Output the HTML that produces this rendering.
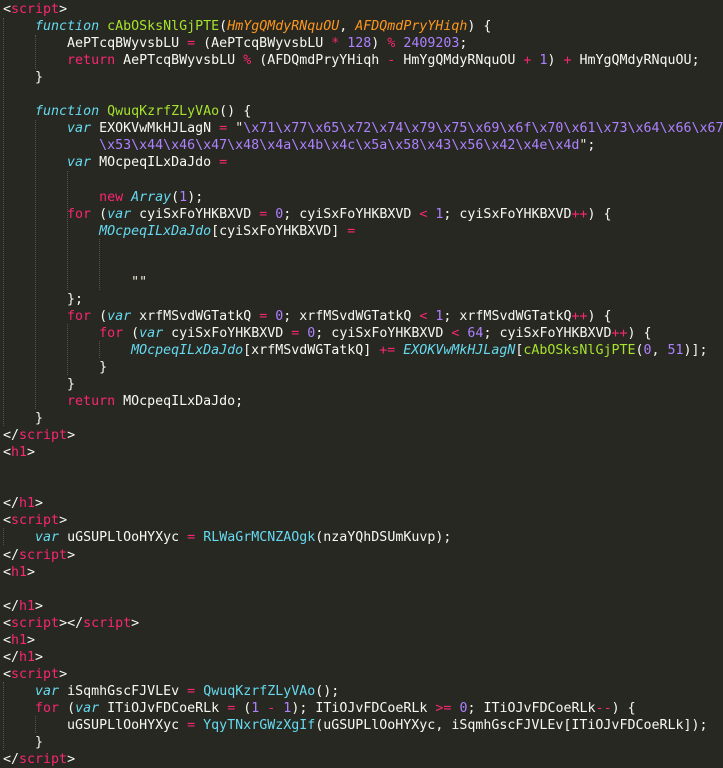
<!DOCTYPE html>
<html><head><meta charset="utf-8"><style>
html,body{margin:0;padding:0;background:#272822;width:723px;height:767px;overflow:hidden}
pre{margin:0;position:absolute;left:3px;top:1px;font-family:"DejaVu Sans Mono","Liberation Mono",monospace;font-size:13.3px;line-height:17.05px;color:#f8f8f2;white-space:pre}
.k{color:#f92672}.s{color:#66d9ef;font-style:italic}.f{color:#a6e22e}.p{color:#fd971f;font-style:italic}
.n{color:#ae81ff}.q{color:#ece9d8}.c{color:#66d9ef}.ci{color:#66d9ef;font-style:italic}
.g{position:absolute;width:0;border-left:1px dotted #55554d}
</style></head><body>
<div class="g" style="left:3px;top:18px;height:408px"></div>
<div class="g" style="left:35px;top:35px;height:34px"></div>
<div class="g" style="left:35px;top:120px;height:289px"></div>
<div class="g" style="left:67px;top:171px;height:119px"></div>
<div class="g" style="left:99px;top:239px;height:51px"></div>
<div class="g" style="left:67px;top:324px;height:51px"></div>
<div class="g" style="left:99px;top:341px;height:17px"></div>
<div class="g" style="left:3px;top:528px;height:17px"></div>
<div class="g" style="left:3px;top:682px;height:68px"></div>
<div class="g" style="left:35px;top:716px;height:17px"></div>
<pre>&lt;<span class="k">script</span>&gt;
    <span class="s">function</span> <span class="f">cAbOSksNlGjPTE</span>(<span class="p">HmYgQMdyRNquOU</span>, <span class="p">AFDQmdPryYHiqh</span>) {
        AePTcqBWyvsbLU <span class="k">=</span> (AePTcqBWyvsbLU <span class="k">*</span> <span class="n">128</span>) <span class="k">%</span> <span class="n">2409203</span>;
        <span class="k">return</span> AePTcqBWyvsbLU <span class="k">%</span> (AFDQmdPryYHiqh <span class="k">-</span> HmYgQMdyRNquOU <span class="k">+</span> <span class="n">1</span>) <span class="k">+</span> HmYgQMdyRNquOU;
    }

    <span class="s">function</span> <span class="f">QwuqKzrfZLyVAo</span>() {
        <span class="s">var</span> EXOKVwMkHJLagN <span class="k">=</span> <span class="q">"</span><span class="n">\x71\x77\x65\x72\x74\x79\x75\x69\x6f\x70\x61\x73\x64\x66\x67\x68</span>
            <span class="n">\x53\x44\x46\x47\x48\x4a\x4b\x4c\x5a\x58\x43\x56\x42\x4e\x4d</span><span class="q">"</span>;
        <span class="s">var</span> MOcpeqILxDaJdo <span class="k">=</span>

            <span class="k">new</span> <span class="ci">Array</span>(<span class="n">1</span>);
        <span class="k">for</span> (<span class="s">var</span> cyiSxFoYHKBXVD <span class="k">=</span> <span class="n">0</span>; cyiSxFoYHKBXVD <span class="k">&lt;</span> <span class="n">1</span>; cyiSxFoYHKBXVD<span class="k">++</span>) {
            <span class="ci">MOcpeqILxDaJdo</span>[cyiSxFoYHKBXVD] <span class="k">=</span>


                <span class="q">""</span>
        };
        <span class="k">for</span> (<span class="s">var</span> xrfMSvdWGTatkQ <span class="k">=</span> <span class="n">0</span>; xrfMSvdWGTatkQ <span class="k">&lt;</span> <span class="n">1</span>; xrfMSvdWGTatkQ<span class="k">++</span>) {
            <span class="k">for</span> (<span class="s">var</span> cyiSxFoYHKBXVD <span class="k">=</span> <span class="n">0</span>; cyiSxFoYHKBXVD <span class="k">&lt;</span> <span class="n">64</span>; cyiSxFoYHKBXVD<span class="k">++</span>) {
                <span class="ci">MOcpeqILxDaJdo</span>[xrfMSvdWGTatkQ] <span class="k">+=</span> <span class="ci">EXOKVwMkHJLagN</span>[<span class="f">cAbOSksNlGjPTE</span>(<span class="n">0</span>, <span class="n">51</span>)];
            }
        }
        <span class="k">return</span> MOcpeqILxDaJdo;
    }
&lt;/<span class="k">script</span>&gt;
&lt;<span class="k">h1</span>&gt;


&lt;/<span class="k">h1</span>&gt;
&lt;<span class="k">script</span>&gt;
    <span class="s">var</span> uGSUPLlOoHYXyc <span class="k">=</span> <span class="c">RLWaGrMCNZAOgk</span>(nzaYQhDSUmKuvp);
&lt;/<span class="k">script</span>&gt;
&lt;<span class="k">h1</span>&gt;

&lt;/<span class="k">h1</span>&gt;
&lt;<span class="k">script</span>&gt;&lt;/<span class="k">script</span>&gt;
&lt;<span class="k">h1</span>&gt;
&lt;/<span class="k">h1</span>&gt;
&lt;<span class="k">script</span>&gt;
    <span class="s">var</span> iSqmhGscFJVLEv <span class="k">=</span> <span class="c">QwuqKzrfZLyVAo</span>();
    <span class="k">for</span> (<span class="s">var</span> ITiOJvFDCoeRLk <span class="k">=</span> (<span class="n">1</span> <span class="k">-</span> <span class="n">1</span>); ITiOJvFDCoeRLk <span class="k">&gt;=</span> <span class="n">0</span>; ITiOJvFDCoeRLk<span class="k">--</span>) {
        uGSUPLlOoHYXyc <span class="k">=</span> <span class="c">YqyTNxrGWzXgIf</span>(uGSUPLlOoHYXyc, iSqmhGscFJVLEv[ITiOJvFDCoeRLk]);
    }
&lt;/<span class="k">script</span>&gt;</pre>
</body></html>
